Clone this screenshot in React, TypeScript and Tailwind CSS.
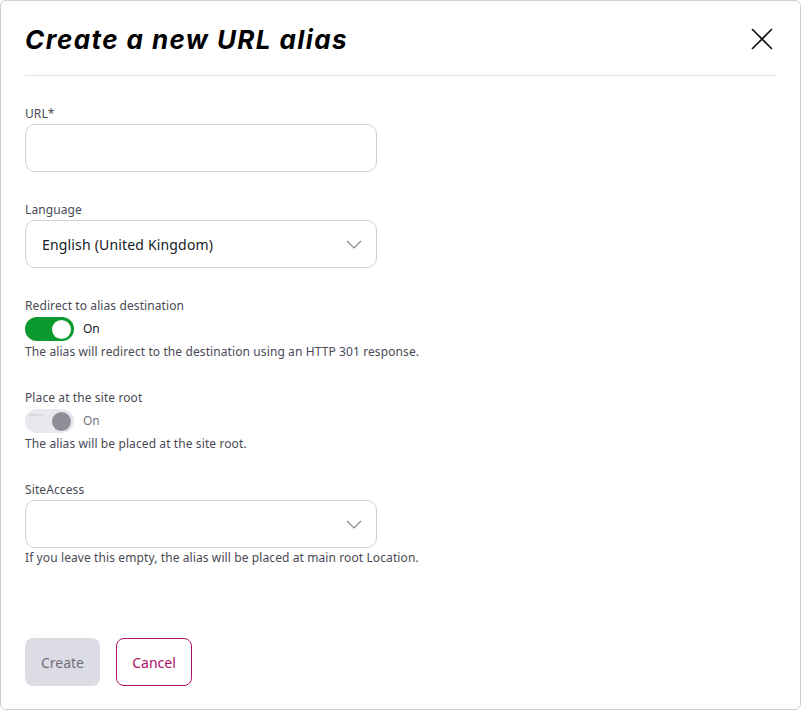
import { ReactNode } from "react";

const body = { fontFamily: '"Noto Sans", "Open Sans", sans-serif' };

function Chevron() {
  return (
    <svg width="16" height="9" viewBox="0 0 16 9" fill="none" aria-hidden="true">
      <path d="M1 1l7 7 7-7" stroke="#8a8a96" strokeWidth="1.2" />
    </svg>
  );
}

function Field({ label, children, hint }: { label: string; children: ReactNode; hint?: string }) {
  return (
    <div className="flex flex-col">
      <label className="mb-[2px] text-[12px] leading-[16px] tracking-[0.1px] text-[#4a4a55]">{label}</label>
      {children}
      {hint && <p className="mt-[2px] text-[12px] leading-[16px] tracking-[0.1px] text-[#4a4a55]">{hint}</p>}
    </div>
  );
}

function Toggle({ on, disabled }: { on: boolean; disabled?: boolean }) {
  return (
    <div className="flex h-[26px] items-center gap-[9px]">
      <span
        className={
          disabled
            ? "relative flex h-[24px] w-[49px] items-center rounded-full bg-[#e8e8ee]"
            : "relative flex h-[24px] w-[49px] items-center rounded-full bg-[#0a9a2e]"
        }
      >
        {disabled && <span className="absolute left-[4px] top-[5px] h-[2px] w-[14px] bg-[#d8d8de]" />}
        <span
          className={
            disabled
              ? "absolute right-[3px] h-[19px] w-[19px] rounded-full bg-[#8e8e98]"
              : "absolute right-[3px] h-[19px] w-[19px] rounded-full bg-white"
          }
        />
      </span>
      <span className={disabled ? "text-[12px] text-[#76767f]" : "text-[12px] text-[#131c26]"}>
        {on ? "On" : "Off"}
      </span>
    </div>
  );
}

export default function App() {
  return (
    <div className="h-[710px] w-[801px] bg-white" style={body}>
      <div className="flex h-full flex-col rounded-[6px] border border-[#cfcfd4] px-[24px]">
        <div className="flex h-[75px] items-center justify-between border-b border-[#e0e0e6] pt-[2px]">
          <h1
            className="text-[26px] font-bold italic tracking-[1.4px] text-black"
            style={{ fontFamily: 'Inter, "Noto Sans", sans-serif' }}
          >
            Create a new URL alias
          </h1>
          <button type="button" aria-label="Close" className="mr-[2px] p-[1px]">
            <svg width="22" height="22" viewBox="0 0 22 22" aria-hidden="true">
              <path d="M1 1l20 20M21 1L1 21" stroke="#111" strokeWidth="1.6" />
            </svg>
          </button>
        </div>

        <div className="mt-[30px] flex flex-col gap-[30px]">
          <Field label="URL*">
            <input
              type="text"
              className="h-[48px] w-[352px] rounded-[10px] border border-[#d0d0d6] px-[16px] text-[14px] outline-none"
            />
          </Field>

          <Field label="Language">
            <div className="flex h-[48px] w-[352px] items-center justify-between rounded-[10px] border border-[#d0d0d6] pl-[16px] pr-[14px]">
              <span className="text-[14px] tracking-[0.17px] text-[#131c26]">English (United Kingdom)</span>
              <Chevron />
            </div>
          </Field>

          <Field label="Redirect to alias destination" hint="The alias will redirect to the destination using an HTTP 301 response.">
            <Toggle on />
          </Field>

          <Field label="Place at the site root" hint="The alias will be placed at the site root.">
            <Toggle on disabled />
          </Field>

          <Field label="SiteAccess" hint="If you leave this empty, the alias will be placed at main root Location.">
            <div className="flex h-[48px] w-[352px] items-center justify-end rounded-[10px] border border-[#d0d0d6] pr-[14px]">
              <Chevron />
            </div>
          </Field>
        </div>

        <div className="mt-[72px] flex gap-[16px]">
          <button
            type="button"
            className="h-[48px] w-[75px] rounded-[8px] bg-[#dcdce4] text-[14px] text-[#6e6e7a]"
          >
            Create
          </button>
          <button
            type="button"
            className="h-[48px] w-[76px] rounded-[8px] border border-[#ae1164] bg-white text-[14px] text-[#ae1164]"
          >
            Cancel
          </button>
        </div>
      </div>
    </div>
  );
}
